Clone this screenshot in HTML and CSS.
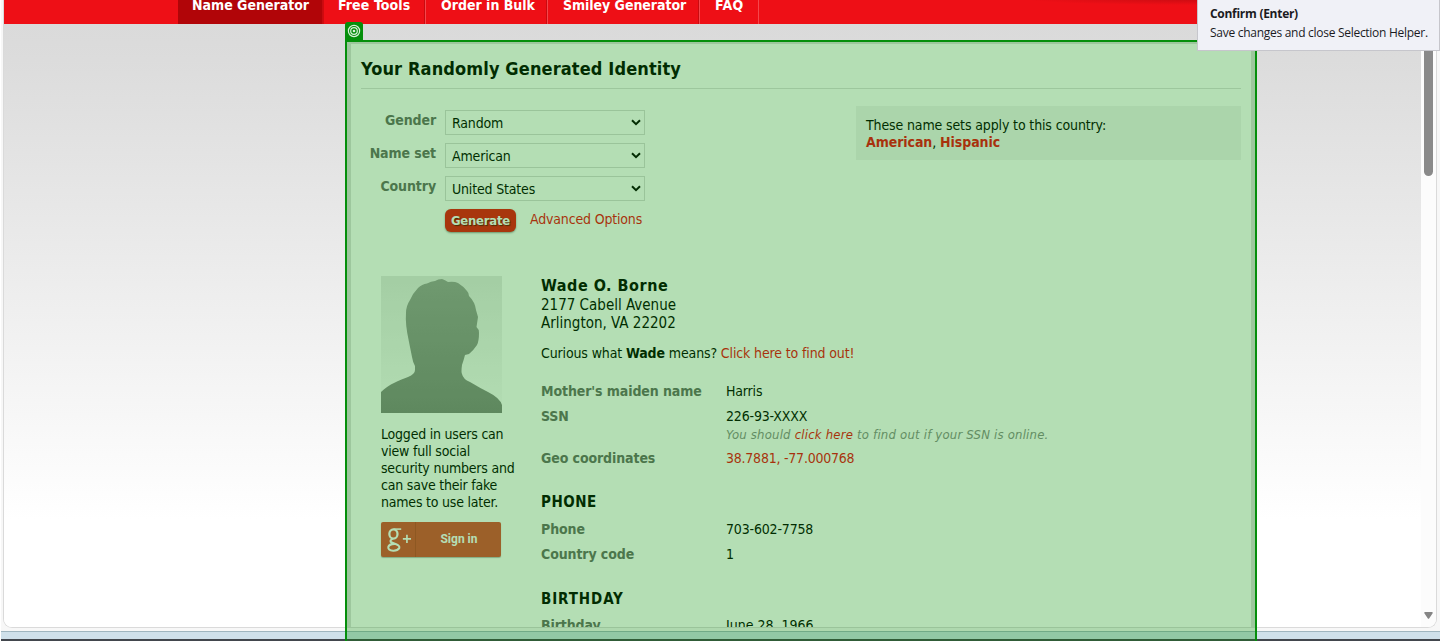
FILE: index.html
```html
<!DOCTYPE html>
<html lang="en">
<head>
<meta charset="utf-8">
<title>Name Generator</title>
<link rel="stylesheet" href="styles.css">
</head>
<body>
<div class="browser">
  <div class="viewport">
    <div class="page">
      <nav class="nav">
        <a class="tab active"><span>Name Generator</span></a>
        <a class="tab tab2"><span>Free Tools</span></a>
        <a class="tab tab3"><span>Order in Bulk</span></a>
        <a class="tab tab4"><span>Smiley Generator</span></a>
        <a class="tab tab5"><span>FAQ</span></a>
      </nav>
      <main class="content">
        <h1>Your Randomly Generated Identity</h1>
        <div class="top">
          <form class="form">
            <label><b>Gender</b></label>
            <div class="field"><select><option>Random</option></select><svg viewBox="0 0 10 7"><path d="M1 1.2 5 5.2 9 1.2"/></svg></div>
            <label><b>Name set</b></label>
            <div class="field"><select><option>American</option></select><svg viewBox="0 0 10 7"><path d="M1 1.2 5 5.2 9 1.2"/></svg></div>
            <label><b>Country</b></label>
            <div class="field"><select><option>United States</option></select><svg viewBox="0 0 10 7"><path d="M1 1.2 5 5.2 9 1.2"/></svg></div>
            <i></i>
            <div class="actions"><button type="button">Generate</button><a class="adv">Advanced Options</a></div>
          </form>
          <aside class="info">
            <div>These name sets apply to this country:</div>
            <div class="sets"><a>American</a>, <a>Hispanic</a></div>
          </aside>
        </div>
        <div class="identity">
          <div class="side">
            <svg class="avatar" viewBox="0 0 121 137">
              <defs>
                <linearGradient id="bg" x2="0" y2="1"><stop offset="0" stop-color="#e8e8e8"/><stop offset="1" stop-color="#fdfdfd"/></linearGradient>
                <linearGradient id="fg" x2="0" y2="1"><stop offset="0" stop-color="#9d9d9d"/><stop offset="1" stop-color="#858585"/></linearGradient>
              </defs>
              <path fill="url(#bg)" d="M0 0h121v137H0z"/>
              <path fill="url(#fg)" d="M0 116C8 108 19 104 27 101Q34 98 34 94L34 90Q32 87 31 81L28 66Q24 48 25 37Q25 30 29 24Q32 17 37 12Q41 8 46 7.500Q50 5 54 5Q57 3 61 3Q64 4 67 6Q73 5 77 7Q82 10 86 15Q88 17 88 20Q94 26 95 34L97 41L95.500 51Q98 53 98 57Q98 65 96 69Q92 75 88 78L84 79Q83 83 81 89Q80 96 81 98Q82 103 89 106Q99 112 107 116Q119 122 121 129V137H0Z"/>
            </svg>
            <p>Logged in users can<br>view full social<br>security numbers and<br>can save their fake<br>names to use later.</p>
            <a class="signin">
              <svg viewBox="0 0 35 35"><g fill="none" stroke="#fff"><ellipse cx="12.800" cy="11.800" rx="4.200" ry="4.800" stroke-width="2.300"/><path stroke-width="1.600" d="M13 6.800h7.800"/><path stroke-width="2.100" d="M12 16.800Q9 18.300 10 20Q12 21.300 15 22.200Q19.700 23.800 18.800 26.400Q17 29.200 12.500 29Q7.200 28.500 7.500 25.300Q8.300 22.200 13.800 22"/><path stroke-width="1.700" d="M22.500 16.800h8.400M26.700 12.600v8.400"/></g></svg>
              <span>Sign in</span>
            </a>
          </div>
          <div class="details">
            <h3>Wade O. Borne</h3>
            <div class="adr">2177 Cabell Avenue<br>Arlington, VA 22202</div>
            <div class="curious">Curious what <b>Wade</b> means? <a>Click here to find out!</a></div>
            <dl>
              <dt>Mother's maiden name</dt><dd>Harris</dd>
              <dt>SSN</dt><dd>226-93-XXXX<div class="hint">You should <a>click here</a> to find out if your SSN is online.</div></dd>
              <dt class="geo">Geo coordinates</dt><dd class="geo"><a class="coords">38.7881, -77.000768</a></dd>
            </dl>
            <h4>PHONE</h4>
            <dl>
              <dt>Phone</dt><dd>703-602-7758</dd>
              <dt>Country code</dt><dd>1</dd>
            </dl>
            <h4 class="birth">BIRTHDAY</h4>
            <dl>
              <dt>Birthday</dt><dd class="date">June 28, 1966</dd>
            </dl>
          </div>
        </div>
      </main>
    </div>
    <div class="scrollbar"><div class="thumb"></div><svg viewBox="0 0 9 7"><path d="M.8 0h7.400q1 .6.3 1.600L5.300 6.300q-.8 1-1.600 0L.5 1.600Q-.2.6.8 0z"/></svg></div>
  </div>
  <div class="taskbar"></div>
  <div class="selection">
    <svg class="target" viewBox="0 0 18 18"><g fill="none" stroke="#d8f0d8" stroke-width="1.200"><circle cx="9" cy="9" r="5.600"/><circle cx="9" cy="9" r="3.300"/></g><circle cx="9" cy="9" r="1.300" fill="#d8f0d8"/></svg>
  </div>
  <div class="tooltip"><b>Confirm (Enter)</b><span>Save changes and close Selection Helper.</span></div>
</div>
</body>
</html>
```
FILE: styles.css
```css
* { box-sizing: border-box; }
body {
  margin: 0;
  width: 1440px;
  height: 641px;
  overflow: hidden;
  background: #fff;
  font: 14px/17px "DejaVu Sans Condensed", "DejaVu Sans", sans-serif;
  font-stretch: condensed;
  color: #000;
}
h1, h3, h4, p, dl, dd { margin: 0; }
a { color: #ee0711; }
span, a, b { white-space: nowrap; }
.browser {
  position: relative;
  height: 641px;
  margin-left: 1px;
  padding: 0 3px 0 2px;
  background: #f7f7f7;
}
.viewport {
  display: flex;
  height: 628px;
  overflow: hidden;
  background: #fff;
  border: solid #dadada;
  border-width: 0 1px 1px;
  border-radius: 0 0 9px 9px;
}
.page {
  width: 1417px;
  height: 627px;
  overflow: hidden;
  background: linear-gradient(#dadada 24px, #dcdcdc 60px, #fff 520px);
}
.nav {
  display: flex;
  height: 24px;
  padding-left: 174px;
  background: radial-gradient(ellipse 170px 6px at 1190px -1px, #c90c12, transparent), #ee0f16;
}
.tab {
  height: 24px;
  padding-left: 14px;
  border-right: 1px solid #f5474c;
  box-shadow: inset -1px 0 #c80b10;
  color: #fff;
  font-weight: bold;
  line-height: 17px;
}
.tab span { display: block; margin-top: -3px; }
.active { width: 146px; background: #b10508; border-right-color: #d00a0e; }
.tab2 { width: 102px; letter-spacing: .1px; }
.tab3 { width: 122px; padding-left: 15px; }
.tab4 { width: 152px; padding-left: 15px; letter-spacing: -.05px; }
.tab5 { width: 59px; padding-left: 15px; letter-spacing: .4px; box-shadow: none; }
.content {
  width: 908px;
  height: 620px;
  margin: 18px 0 0 343px;
  padding: 2px 12px 0 10px;
  border: solid #dedede;
  border-width: 2px 4px 0;
  background: #fff;
}
h1 {
  height: 43px;
  margin-right: -2px;
  padding-top: 12px;
  border-bottom: 1px solid #dedede;
  font-size: 18px;
  line-height: 22px;
  letter-spacing: .125px;
}
.top {
  display: flex;
  justify-content: space-between;
  margin-right: -2px;
  padding-top: 17px;
  height: 187px;
}
.form {
  display: grid;
  grid-template-columns: 75px 200px;
  grid-template-rows: 33px 33px 33px 24px;
  column-gap: 9px;
  padding-top: 4px;
}
.form label {
  padding-top: 2px;
  text-align: right;
  letter-spacing: -.1px;
  color: #6a6a6a;
}
.field { display: grid; height: 25px; width: 200px; }
.field select {
  grid-area: 1 / 1;
  appearance: none;
  width: 200px;
  height: 25px;
  padding: 1px 6px 0;
  background: transparent;
  border: 1px solid #dadada;
  border-radius: 0;
  font: inherit;
  letter-spacing: -.17px;
  color: #000;
}
.field svg {
  grid-area: 1 / 1;
  width: 10px;
  height: 7px;
  justify-self: end;
  align-self: center;
  margin-right: 4px;
  fill: none;
  stroke: #000;
  stroke-width: 2;
}
.actions { display: flex; gap: 14px; }
.actions button {
  width: 71px;
  height: 23px;
  padding: 0;
  border: 0;
  border-radius: 6px;
  background: #ee0f11;
  color: #fff;
  font: bold 13px/23px "DejaVu Sans Condensed", "DejaVu Sans", sans-serif;
  letter-spacing: -.25px;
  text-shadow: 1px 1px 1px #600;
  box-shadow: 0 1px 2px #999;
}
.adv { padding-top: 2px; letter-spacing: -.17px; }
.info {
  width: 385px;
  height: 54px;
  padding: 11px 10px 0;
  background: #f2f2f2;
  letter-spacing: -.13px;
}
.sets { font-weight: bold; letter-spacing: -.08px; }
.sets { font-weight: normal; }
.sets a { font-weight: bold; }
.identity { display: flex; margin-left: 20px; }
.side { width: 160px; }
.avatar { display: block; width: 121px; height: 137px; }
.side p { margin-top: 13px; letter-spacing: -.21px; white-space: nowrap; }
.signin {
  display: flex;
  align-items: center;
  width: 120px;
  height: 35px;
  margin-top: 11px;
  border-radius: 2px;
  background: #dd4b39;
  color: #fff;
  font: bold 12px/17px Roboto, sans-serif;
  box-shadow: 0 1px 1px #bbb;
}
.signin svg { width: 35px; height: 35px; border-right: 1px solid #c9402f; }
.signin span { flex: 1; padding-left: 1px; text-align: center; }
h3 { height: 20px; font-size: 16px; line-height: 20px; letter-spacing: .52px; }
.adr { font-size: 15px; line-height: 18px; }
.curious { margin: 13px 0 21px; letter-spacing: -.13px; }
dl { display: grid; grid-template-columns: 185px 400px; row-gap: 8px; }
dt { color: #6a6a6a; font-weight: bold; letter-spacing: -.1px; }
dd { letter-spacing: -.17px; }
.hint {
  margin-top: 1px;
  font-size: 13px;
  font-style: italic;
  letter-spacing: .2px;
  color: #8c8c8c;
  white-space: nowrap;
}
.coords { letter-spacing: -.23px; }
.date { letter-spacing: 0; }
.geo { margin-top: -1px; }
h4 { margin: 26px 0 10px; height: 18px; font-size: 15px; line-height: 18px; letter-spacing: .5px; }
.birth { margin: 27px 0 9px; letter-spacing: .9px; }
.scrollbar {
  flex: 1;
  display: flex;
  flex-direction: column;
  align-items: center;
  justify-content: space-between;
  padding-bottom: 8px;
  background: #fcfcfc;
}
.thumb { width: 9px; height: 176px; border-radius: 0 0 5px 5px; background: #8a8a8a; }
.scrollbar svg { width: 9px; height: 7px; fill: #858585; }
.taskbar {
  height: 10px;
  margin: 3px -3px 0 -2px;
  border-top: 1px solid #9fb5bf;
  border-bottom: 2px solid #42464d;
  background: #cfe0ea;
}
.selection {
  position: absolute;
  left: 344px;
  top: 40px;
  width: 912px;
  height: 601px;
  border: solid #058f0b;
  border-width: 2px 2px 0;
  background: rgba(8, 145, 8, .3);
}
.target {
  position: absolute;
  left: -2px;
  top: -20px;
  width: 18px;
  height: 18px;
  background: #058f0b;
  border-radius: 3px 3px 0 0;
}
.tooltip {
  position: absolute;
  left: 1196px;
  top: -2px;
  width: 243px;
  height: 53px;
  padding: 6px 12px;
  display: flex;
  flex-direction: column;
  gap: 2px;
  border: 1px solid #c6c6cc;
  background: #f0f1f7;
  color: #1b1b1f;
  font: 12px/17px "Open Sans", "Noto Sans", sans-serif;
  letter-spacing: -.28px;
}
```
